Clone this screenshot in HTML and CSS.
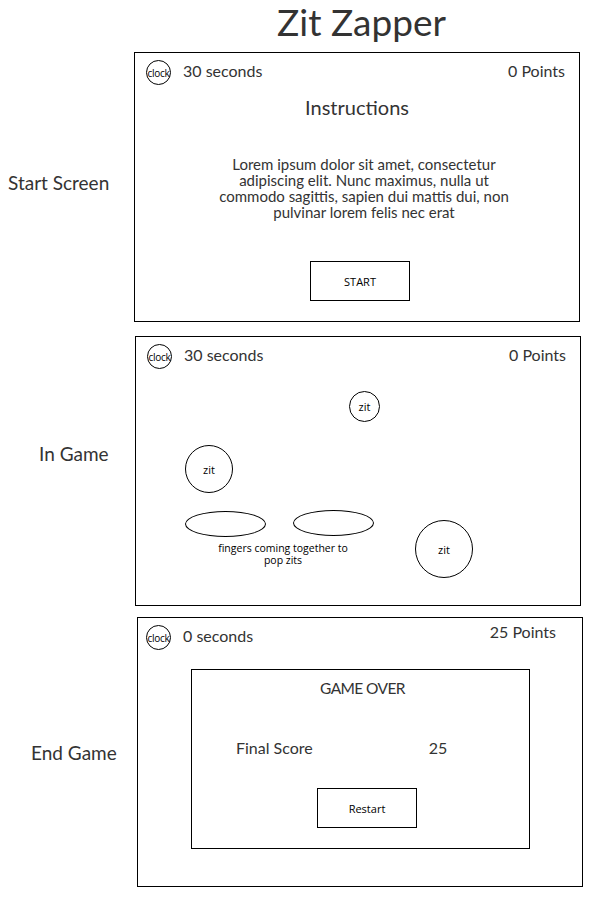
FILE: index.html
```html
<!DOCTYPE html>
<html>
<head>
<meta charset="utf-8">
<link rel="stylesheet" href="styles.css">
</head>
<body>
<h1 class="title">Zit Zapper</h1>

<div class="row row-start">
  <div class="label label-start">Start Screen</div>
  <div class="screen">
    <div class="hud">
      <div class="clock">clock</div>
      <div class="time">30 seconds</div>
      <div class="points">0 Points</div>
    </div>
    <h2 class="instructions">Instructions</h2>
    <p class="lorem">Lorem ipsum dolor sit amet, consectetur<br>adipiscing elit. Nunc maximus, nulla ut<br>commodo sagittis, sapien dui mattis dui, non<br>pulvinar lorem felis nec erat</p>
    <div class="btn btn-start">START</div>
  </div>
</div>

<div class="row row-game">
  <div class="label label-game">In Game</div>
  <div class="screen screen-game">
    <div class="hud">
      <div class="clock">clock</div>
      <div class="time">30 seconds</div>
      <div class="points">0 Points</div>
    </div>
    <div class="zit zit-s">zit</div>
    <div class="zit zit-m">zit</div>
    <div class="zit zit-l">zit</div>
    <div class="finger finger-1"></div>
    <div class="finger finger-2"></div>
    <div class="fingers-note">fingers coming together to<br>pop zits</div>
  </div>
</div>

<div class="row row-end">
  <div class="label label-end">End Game</div>
  <div class="screen">
    <div class="hud hud-end">
      <div class="clock">clock</div>
      <div class="time time-end">0 seconds</div>
      <div class="points points-end">25 Points</div>
    </div>
    <div class="gameover">
      <div class="go-title">GAME OVER</div>
      <div class="score-row">
        <span class="score-label">Final Score</span>
        <span class="score-value">25</span>
      </div>
      <div class="btn btn-restart">Restart</div>
    </div>
  </div>
</div>
</body>
</html>
```

FILE: styles.css
```css
html, body {
  margin: 0;
  padding: 0;
  background: #fff;
}
body {
  font-family: "Lato", "Open Sans", sans-serif;
  color: #333;
  width: 601px;
}
.title {
  margin: 0;
  height: 52px;
  font-size: 37px;
  font-weight: 400;
  line-height: 44px;
  text-align: center;
  padding-left: 122px;
  box-sizing: border-box;
}
.row {
  display: flex;
  align-items: flex-start;
}
.row-game { margin-top: 14px; }
.row-end { margin-top: 11px; }
.label {
  width: 134px;
  flex: none;
  box-sizing: border-box;
  font-size: 19px;
  line-height: 24px;
  white-space: nowrap;
}
.label-start { padding-left: 8px; margin-top: 119px; }
.label-game { padding-left: 39px; margin-top: 106px; }
.label-end { padding-left: 31px; margin-top: 124px; }
.screen {
  width: 446px;
  height: 270px;
  box-sizing: border-box;
  border: 1px solid #000;
  flex: none;
  position: relative;
}
.row-game .screen { margin-left: 1px; }
.row-end .screen { margin-left: 3px; }
.hud {
  display: flex;
  align-items: center;
  padding: 6px 14px 0 11px;
  height: 27px;
}
.hud-end { padding-left: 8px; }
.clock {
  width: 25px;
  height: 25px;
  box-sizing: border-box;
  border: 1px solid #000;
  border-radius: 50%;
  font-family: "Open Sans", sans-serif;
  font-size: 10px;
  color: #000;
  display: flex;
  align-items: center;
  justify-content: center;
  letter-spacing: -0.3px;
  flex: none;
}
.time {
  margin-left: 12px;
  font-size: 16px;
  line-height: 20px;
  margin-top: -4px;
}
.points {
  margin-left: auto;
  font-size: 16px;
  line-height: 20px;
  margin-top: -4px;
}
.time-end { margin-top: -3px; }
.points-end { margin-top: -12px; margin-right: 12px; }
.instructions {
  margin: 8px 0 0;
  text-align: center;
  font-size: 20px;
  font-weight: 400;
  line-height: 26px;
}
.lorem {
  margin: 36px 0 0 14px;
  text-align: center;
  font-size: 15px;
  line-height: 16px;
}
.btn {
  width: 100px;
  height: 40px;
  box-sizing: border-box;
  border: 1px solid #000;
  display: flex;
  align-items: center;
  justify-content: center;
  font-family: "Open Sans", sans-serif;
  font-size: 11px;
  color: #000;
}
.btn-start {
  margin: 41px 0 0 175px;
}
.zit {
  position: absolute;
  box-sizing: border-box;
  border: 1px solid #000;
  border-radius: 50%;
  display: flex;
  align-items: center;
  justify-content: center;
  font-family: "Open Sans", sans-serif;
  font-size: 11px;
  color: #000;
}
.zit-s { left: 213px; top: 54px; width: 31px; height: 31px; }
.zit-m { left: 49px; top: 108px; width: 48px; height: 48px; }
.zit-l { left: 279px; top: 183px; width: 58px; height: 58px; }
.finger {
  position: absolute;
  width: 81px;
  height: 26px;
  box-sizing: border-box;
  border: 1px solid #000;
  border-radius: 50%;
}
.finger-1 { left: 49px; top: 174px; }
.finger-2 { left: 157px; top: 173px; }
.fingers-note {
  position: absolute;
  left: 72px;
  top: 205px;
  width: 150px;
  text-align: center;
  font-family: "Open Sans", sans-serif;
  font-size: 10.5px;
  line-height: 12px;
  color: #000;
}
.gameover {
  margin: 18px 0 0 53px;
  width: 339px;
  height: 180px;
  box-sizing: border-box;
  border: 1px solid #000;
  display: flex;
  flex-direction: column;
}
.go-title {
  text-align: center;
  font-size: 15.5px;
  letter-spacing: -0.6px;
  line-height: 20px;
  margin-top: 8px;
  padding-left: 4px;
}
.score-row {
  display: flex;
  margin-top: 40px;
  padding-left: 44px;
  font-size: 16px;
  line-height: 20px;
}
.score-value {
  margin-left: 116px;
}
.btn-restart {
  margin: 30px 0 0 125px;
}
```
